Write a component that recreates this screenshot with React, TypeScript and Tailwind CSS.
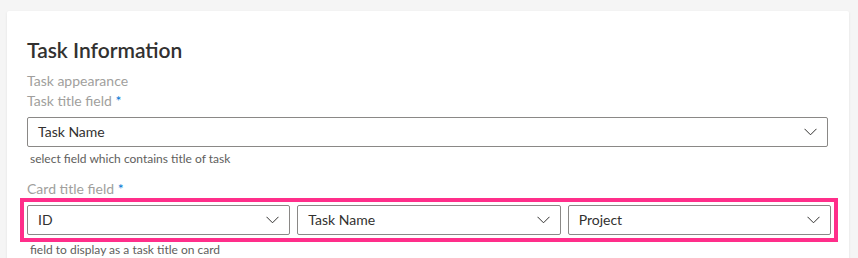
import React from "react";

const font = { fontFamily: 'Lato, "Open Sans", sans-serif' };

function Chevron() {
  return (
    <svg width="13" height="8" viewBox="0 0 13 8" fill="none" className="shrink-0">
      <path d="M0.5 0.8 L6.5 6.8 L12.5 0.8" stroke="#323130" strokeWidth="1" />
    </svg>
  );
}

function Select({ value, className = "" }: { value: string; className?: string }) {
  return (
    <div
      className={
        "flex h-[30px] items-center justify-between border border-[#8a8886] rounded-[2px] bg-white pl-[10px] pr-[10px] " +
        className
      }
    >
      <span className="text-[14px] leading-[20px] text-[#323130]">{value}</span>
      <Chevron />
    </div>
  );
}

export default function App() {
  return (
    <div className="w-[858px] h-[258px] overflow-hidden bg-[#f5f5f5] pt-[11px] pl-[7px] pr-[9px]" style={font}>
      <div className="bg-white rounded-[2px] shadow-[0_1px_3px_rgba(0,0,0,0.08)] h-[300px] pl-[20px] pr-[21px] pt-[25px]">
        <h1 className="text-[21px] leading-[28px] font-semibold text-[#323130]">Task Information</h1>
        <div className="mt-[7px] text-[14px] leading-[20px] text-[#a19f9d]">Task appearance</div>
        <div className="text-[14px] leading-[20px] text-[#a19f9d]">
          Task title field <span className="text-[#0078d4]">*</span>
        </div>
        <Select value="Task Name" className="mt-[6px]" />
        <div className="mt-[4px] pl-[3px] text-[12px] leading-[16px] text-[#605e5c]">
          select field which contains title of task
        </div>
        <div className="mt-[13px] text-[14px] leading-[18px] text-[#a19f9d]">
          Card title field <span className="text-[#0078d4]">*</span>
        </div>
        <div className="-ml-[7px] mr-[-10px] border-[4px] border-[#ff2e8a] p-[3px] flex gap-[7px]">
          <Select value="ID" className="flex-1" />
          <Select value="Task Name" className="flex-1" />
          <Select value="Project" className="flex-1" />
        </div>
        <div className="pl-[3px] text-[12px] leading-[16px] text-[#605e5c]">
          field to display as a task title on card
        </div>
      </div>
    </div>
  );
}
